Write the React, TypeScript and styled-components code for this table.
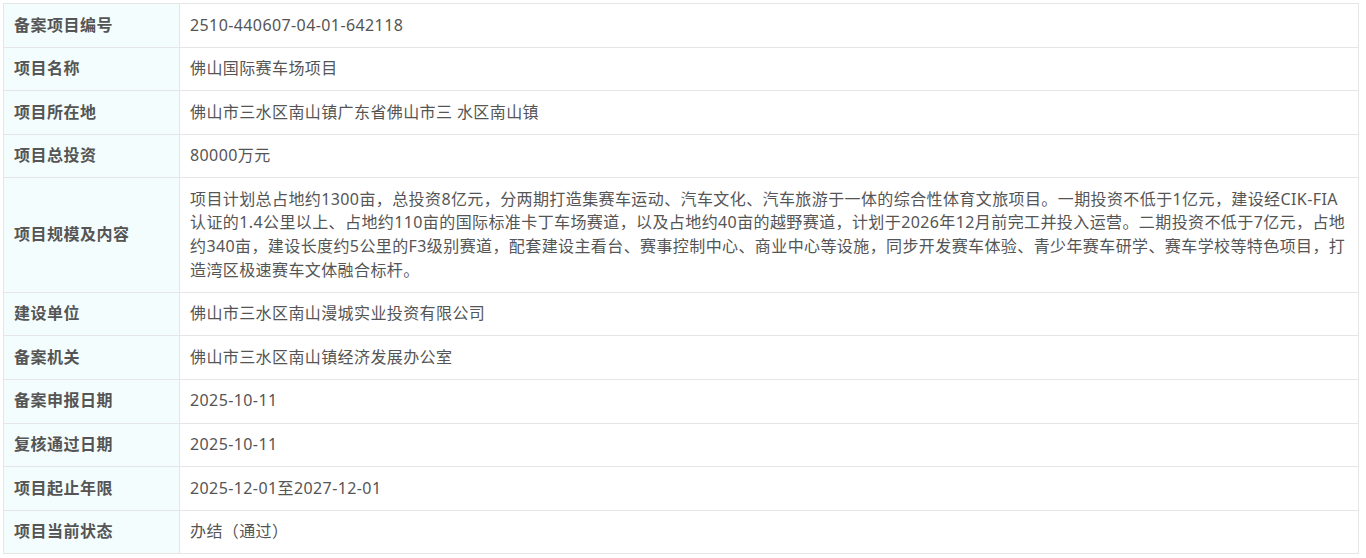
import styled, { createGlobalStyle } from 'styled-components';

const GlobalStyle = createGlobalStyle`
  html, body {
    margin: 0;
    padding: 0;
    background: #fff;
  }
  body {
    font-family: "Noto Sans", "Noto Sans CJK SC", sans-serif;
  }
`;

const Wrapper = styled.div`
  padding: 3px 7px 0 3px;
`;

const InfoTable = styled.table`
  width: 100%;
  border-collapse: collapse;
  table-layout: fixed;
  font-size: 16px;
  letter-spacing: 0.4px;
  color: #555;
`;

const LabelCell = styled.th`
  width: 176px;
  padding: 9.5px 10px;
  line-height: 23.6px;
  background: #f4fdfd;
  border: 1px solid #e6e6e6;
  text-align: left;
  font-weight: 700;
  color: #555;
  box-sizing: border-box;
  letter-spacing: 0.5px;
`;

const ValueCell = styled.td`
  padding: 9.5px 10px;
  line-height: 23.6px;
  border: 1px solid #e6e6e6;
  text-align: left;
`;

const rows: [string, string][] = [
  ['备案项目编号', '2510-440607-04-01-642118'],
  ['项目名称', '佛山国际赛车场项目'],
  ['项目所在地', '佛山市三水区南山镇广东省佛山市三 水区南山镇'],
  ['项目总投资', '80000万元'],
  [
    '项目规模及内容',
    '项目计划总占地约1300亩，总投资8亿元，分两期打造集赛车运动、汽车文化、汽车旅游于一体的综合性体育文旅项目。一期投资不低于1亿元，建设经CIK-FIA认证的1.4公里以上、占地约110亩的国际标准卡丁车场赛道，以及占地约40亩的越野赛道，计划于2026年12月前完工并投入运营。二期投资不低于7亿元，占地约340亩，建设长度约5公里的F3级别赛道，配套建设主看台、赛事控制中心、商业中心等设施，同步开发赛车体验、青少年赛车研学、赛车学校等特色项目，打造湾区极速赛车文体融合标杆。',
  ],
  ['建设单位', '佛山市三水区南山漫城实业投资有限公司'],
  ['备案机关', '佛山市三水区南山镇经济发展办公室'],
  ['备案申报日期', '2025-10-11'],
  ['复核通过日期', '2025-10-11'],
  ['项目起止年限', '2025-12-01至2027-12-01'],
  ['项目当前状态', '办结（通过）'],
];

const App = () => (
  <>
    <GlobalStyle />
    <Wrapper>
      <InfoTable>
        <tbody>
          {rows.map(([label, value]) => (
            <tr key={label}>
              <LabelCell>{label}</LabelCell>
              <ValueCell>{value}</ValueCell>
            </tr>
          ))}
        </tbody>
      </InfoTable>
    </Wrapper>
  </>
);

export default App;
